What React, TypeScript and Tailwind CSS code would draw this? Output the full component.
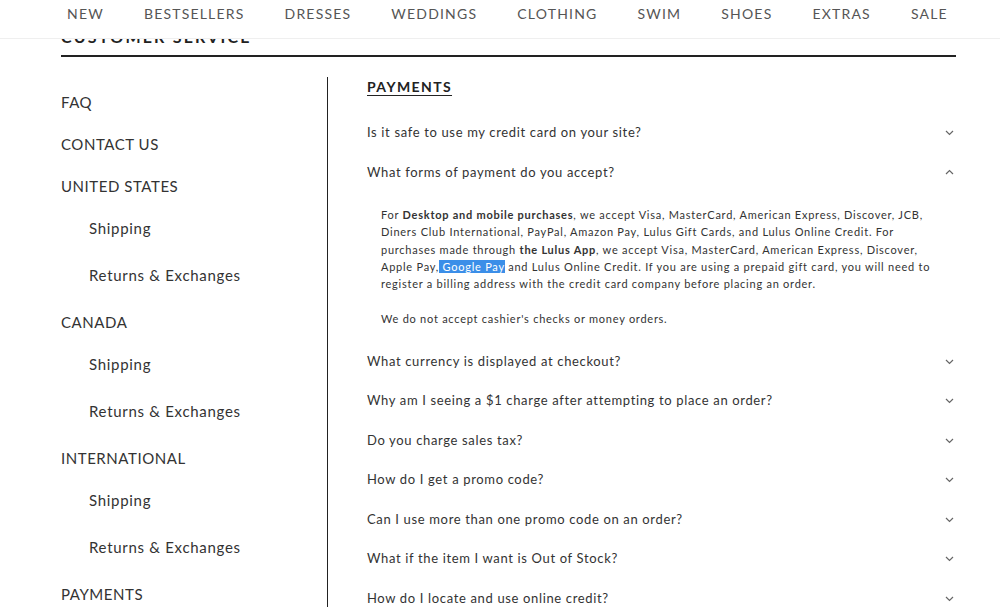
import React from "react";

const navItems = ["NEW", "BESTSELLERS", "DRESSES", "WEDDINGS", "CLOTHING", "SWIM", "SHOES", "EXTRAS", "SALE"];

type SideItem = { label: string; sub?: boolean };

const sideItems: SideItem[] = [
  { label: "FAQ" },
  { label: "CONTACT US" },
  { label: "UNITED STATES" },
  { label: "Shipping", sub: true },
  { label: "Returns & Exchanges", sub: true },
  { label: "CANADA" },
  { label: "Shipping", sub: true },
  { label: "Returns & Exchanges", sub: true },
  { label: "INTERNATIONAL" },
  { label: "Shipping", sub: true },
  { label: "Returns & Exchanges", sub: true },
  { label: "PAYMENTS" },
];

const questionsAfter = [
  "What currency is displayed at checkout?",
  "Why am I seeing a $1 charge after attempting to place an order?",
  "Do you charge sales tax?",
  "How do I get a promo code?",
  "Can I use more than one promo code on an order?",
  "What if the item I want is Out of Stock?",
  "How do I locate and use online credit?",
];

const Chevron = ({ up = false }: { up?: boolean }) => (
  <svg width="9" height="6" viewBox="0 0 9 6" className="shrink-0">
    <path
      d={up ? "M1 5L4.5 1.5L8 5" : "M1 1L4.5 4.5L8 1"}
      fill="none"
      stroke="#666"
      strokeWidth="1.2"
    />
  </svg>
);

const Question = ({ text, open = false }: { text: string; open?: boolean }) => (
  <div className="flex h-[39.5px] items-center justify-between pr-[2px]">
    <span className="text-[13px] tracking-[0.65px] text-[#333]">{text}</span>
    <Chevron up={open} />
  </div>
);

export default function App() {
  return (
    <div
      className="relative h-[607px] w-full overflow-hidden bg-white"
      style={{ fontFamily: "Lato, 'Open Sans', sans-serif" }}
    >
      {/* top nav sits over the scrolled page */}
      <nav className="relative z-10 flex h-[39px] justify-between border-b border-[#efefef] bg-white pl-[67px] pr-[52px] pt-[5px]">
        {navItems.map((item) => (
          <span key={item} className="text-[14px] leading-[17px] tracking-[1.2px] text-[#555]">
            {item}
          </span>
        ))}
      </nav>

      <div className="ml-[61px] w-[895px]">
        <h1 className="-mt-[12px] text-[16px] font-bold leading-[20px] tracking-[2.2px] text-[#222]">
          CUSTOMER SERVICE
        </h1>
        <div className="mt-[8px] h-[2px] bg-[#222]" />

        <div className="mt-[20px] flex">
          <aside className="w-[267px] shrink-0 border-r border-[#222] pt-[4px]">
            {sideItems.map((item, i) =>
              item.sub ? (
                <div key={i} className="flex h-[47px] items-center pb-[5px] pl-[28px] text-[15px] tracking-[0.7px] text-[#333]">
                  {item.label}
                </div>
              ) : (
                <div key={i} className="flex h-[42px] items-center text-[15px] tracking-[0.55px] text-[#333]">
                  {item.label}
                </div>
              )
            )}
          </aside>

          <main className="min-w-0 flex-1 pl-[39px] pt-[1px]">
            <h2 className="text-[14px] font-bold leading-[18px] tracking-[1.4px] text-[#222] underline underline-offset-[3px]">
              PAYMENTS
            </h2>
            <div className="mt-[17px]">
              <Question text="Is it safe to use my credit card on your site?" />
              <Question text="What forms of payment do you accept?" open />
              <div className="pb-[14px] pl-[14px] pt-[14px] text-[11px] leading-[17.3px] tracking-[0.75px] text-[#333]">
                <p>
                  For <b className="font-bold">Desktop and mobile purchases</b>, we accept Visa, MasterCard, American Express, Discover, JCB,
                  <br />
                  Diners Club International, PayPal, Amazon Pay, Lulus Gift Cards, and Lulus Online Credit. For
                  <br />
                  purchases made through <b className="font-bold">the Lulus App</b>, we accept Visa, MasterCard, American Express, Discover,
                  <br />
                  Apple Pay,<span className="bg-[#3b8ee8] text-white"> Google Pay</span> and Lulus Online Credit. If you are using a prepaid gift card, you will need to
                  <br />
                  register a billing address with the credit card company before placing an order.
                </p>
                <p className="mt-[18px]">We do not accept cashier's checks or money orders.</p>
              </div>
              {questionsAfter.map((q) => (
                <Question key={q} text={q} />
              ))}
            </div>
          </main>
        </div>
      </div>
    </div>
  );
}
